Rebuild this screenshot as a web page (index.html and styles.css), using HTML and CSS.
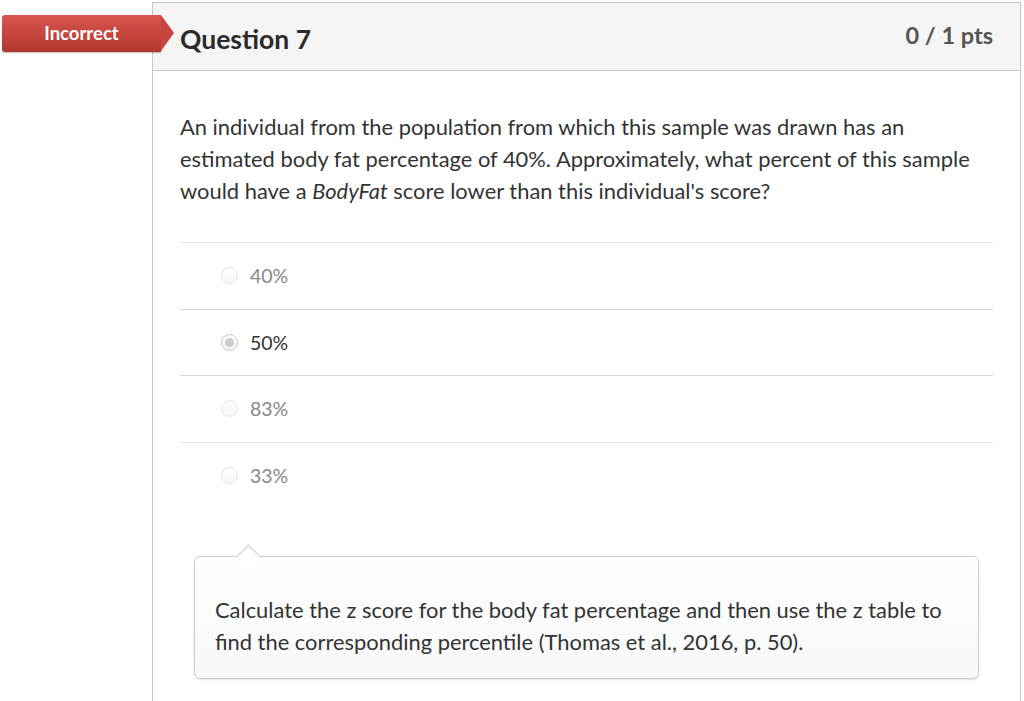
FILE: index.html
```html
<!DOCTYPE html>
<html>
<head>
<meta charset="utf-8">
<link rel="stylesheet" href="styles.css">
</head>
<body>
<div class="page">
  <div class="gutter"></div>
  <div class="question">
    <div class="badge">Incorrect</div>
    <div class="q-header">
      <h2 class="q-title">Question 7</h2>
      <div class="q-pts">0 / 1 pts</div>
    </div>
    <div class="q-body">
      <p class="q-text">An individual from the population from which this sample was drawn has an estimated body fat percentage of 40%. Approximately, what percent of this sample would have a <em>BodyFat</em> score lower than this individual's score?</p>
      <ul class="answers">
        <li class="answer"><span class="radio"></span><span class="a-text">40%</span></li>
        <li class="answer selected"><span class="radio"></span><span class="a-text">50%</span></li>
        <li class="answer"><span class="radio"></span><span class="a-text">83%</span></li>
        <li class="answer"><span class="radio"></span><span class="a-text">33%</span></li>
      </ul>
      <div class="comment">
        <span class="arrow"></span>
        <p class="c-text">Calculate the z score for the body fat percentage and then use the z table to find the corresponding percentile (Thomas et al., 2016, p. 50).</p>
      </div>
    </div>
  </div>
</div>
</body>
</html>
```
FILE: styles.css
```css
html, body {
  margin: 0;
  padding: 0;
  background: #fff;
  font-family: Lato, "Open Sans", sans-serif;
  color: #333;
}
.page {
  display: flex;
  padding-top: 2px;
  height: 699px;
  overflow: hidden;
}
.gutter {
  width: 152px;
  flex: none;
}
.question {
  position: relative;
  flex: 1;
  margin-right: 3px;
  border: 1px solid #c7c7c7;
  border-bottom: none;
}
.badge {
  position: absolute;
  left: -151px;
  top: 12px;
  width: 159px;
  height: 37px;
  line-height: 37px;
  color: #fff;
  font-weight: 700;
  font-size: 18.5px;
  text-align: center;
  background: linear-gradient(#d8554f, #b3372f);
  border-radius: 3px 0 0 3px;
  box-shadow: 0 1px 1px rgba(0,0,0,0.25);
}
.badge::after {
  content: "";
  position: absolute;
  right: -13px;
  top: 0;
  width: 0;
  height: 0;
  border-top: 18.5px solid transparent;
  border-bottom: 18.5px solid transparent;
  border-left: 13px solid #c6443d;
}
.q-header {
  display: flex;
  justify-content: space-between;
  align-items: flex-start;
  height: 67px;
  background: #f5f5f5;
  border-bottom: 1px solid #c7c7c7;
  padding: 0 27px 0 27px;
}
.q-title {
  margin: 19px 0 0 0;
  font-size: 26.5px;
  line-height: 34px;
  font-weight: 700;
  color: #2a2a2a;
}
.q-pts {
  margin-top: 16px;
  font-size: 23.5px;
  line-height: 32px;
  font-weight: 700;
  color: #555;
}
.q-body {
  padding: 40px 27px 0 27px;
}
.q-text {
  margin: 0;
  font-size: 21.9px;
  line-height: 32px;
  color: #333;
}
.answers {
  list-style: none;
  margin: 35px 0 0 0;
  padding: 0;
}
.answer {
  display: flex;
  align-items: center;
  height: 65.5px;
  border-top: 1px solid #e6e6e6;
  padding-left: 41px;
  font-size: 19.5px;
  color: #888;
}
.answer.selected {
  color: #333;
}
.answer:nth-child(2), .answer:nth-child(3) {
  border-top-color: #d8d8d8;
}
.radio {
  width: 17px;
  height: 17px;
  border: 1px solid #e2e2e2;
  border-radius: 50%;
  background: linear-gradient(#fff, #f6f6f6);
  box-sizing: border-box;
  margin-right: 12px;
  position: relative;
}
.selected .radio {
  border-color: #c4c4c4;
}
.selected .radio::after {
  content: "";
  position: absolute;
  left: 3px;
  top: 3px;
  width: 9px;
  height: 9px;
  border-radius: 50%;
  background: #cdcdcd;
}
.comment {
  position: relative;
  margin: 48px 14px 0 14px;
  border: 1px solid #c7cdd1;
  border-radius: 6px;
  background: linear-gradient(#fff, #f7f8f9);
  box-shadow: 0 1px 2px rgba(0,0,0,0.12);
  padding: 37px 20px 20px 20px;
}
.arrow {
  position: absolute;
  left: 45px;
  top: -9px;
  width: 16px;
  height: 16px;
  background: #fff;
  border-top: 1px solid #c7cdd1;
  border-left: 1px solid #c7cdd1;
  transform: rotate(45deg);
}
.c-text {
  margin: 0;
  font-size: 21.9px;
  line-height: 32px;
  color: #333;
}
```
